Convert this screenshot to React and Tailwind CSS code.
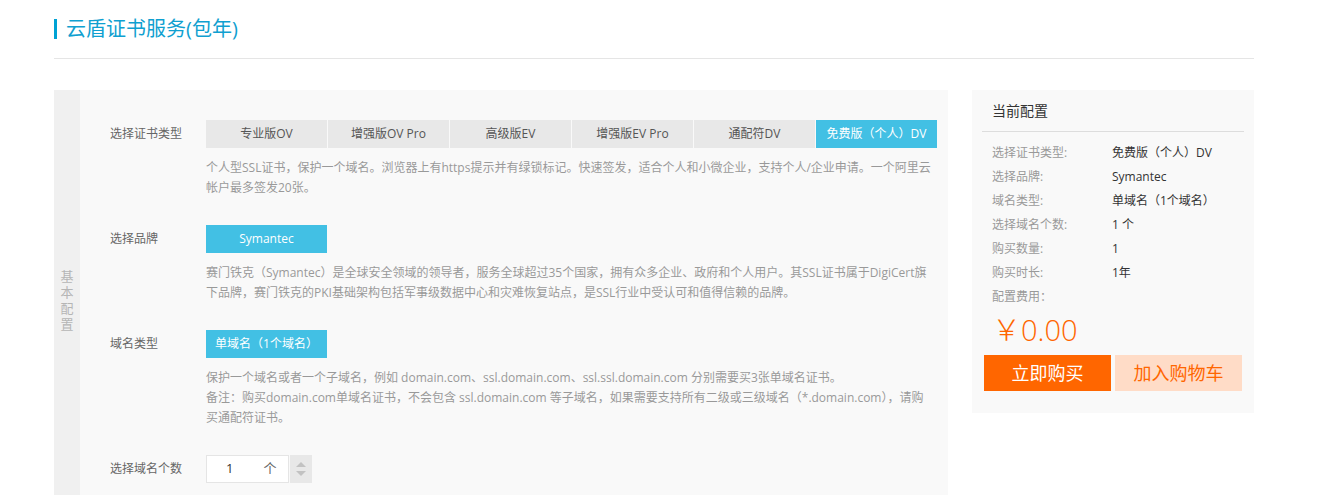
import React from "react";

const tabs = ["专业版OV", "增强版OV Pro", "高级版EV", "增强版EV Pro", "通配符DV", "免费版（个人）DV"];

function Desc({ lines }) {
  return (
    <div className="mt-[10px] text-[12px] leading-[20px] text-[#999]">
      {lines.map((l, i) => (
        <div key={i} className="whitespace-nowrap">{l}</div>
      ))}
    </div>
  );
}

function Row({ label, children, last }) {
  return (
    <div className={`flex ${last ? "" : "mb-[27px]"}`}>
      <div className="w-[96px] shrink-0 text-[12px] leading-[28px] text-[#666]">{label}</div>
      <div className="flex-1">{children}</div>
    </div>
  );
}

function Btn({ children }) {
  return (
    <div className="w-[121px] h-[28px] flex items-center justify-center bg-[#42c0e4] text-white text-[12px] whitespace-nowrap">
      {children}
    </div>
  );
}

const summary = [
  ["选择证书类型:", "免费版（个人）DV"],
  ["选择品牌:", "Symantec"],
  ["域名类型:", "单域名（1个域名）"],
  ["选择域名个数:", "1 个"],
  ["购买数量:", "1"],
  ["购买时长:", "1年"],
];

export default function App() {
  return (
    <div className="w-[1341px] min-h-[495px] bg-white font-['Open_Sans','Noto_Sans_CJK_SC',sans-serif]">
      <div className="ml-[54px] w-[1200px]">
        <div className="pt-[19px] pb-[19px] border-b border-[#e5e5e5]">
          <div className="flex items-center h-[20px]">
            <div className="w-[3px] h-[20px] bg-[#00a2d4]" />
            <div className="ml-[9px] text-[20px] leading-[20px] text-[#0fa0d0]">云盾证书服务(包年)</div>
          </div>
        </div>

        <div className="mt-[31px] flex items-start">
          {/* left panel */}
          <div className="w-[894px] flex bg-[#f9f9f9]">
            <div className="w-[26px] shrink-0 bg-[#f0f0f0] flex flex-col items-center justify-center text-[13px] leading-[16px] text-[#b5b5b5]">
              <span className="block h-[16px] leading-[16px]">基</span>
              <span className="block h-[16px] leading-[16px]">本</span>
              <span className="block h-[16px] leading-[16px]">配</span>
              <span className="block h-[16px] leading-[16px]">置</span>
            </div>
            <div className="flex-1 pl-[30px] pt-[30px] pb-[27px]">
              <Row label="选择证书类型">
                <div className="flex gap-[1px]">
                  {tabs.map((t, i) => (
                    <div
                      key={t}
                      className={`w-[121px] h-[28px] flex items-center justify-center text-[12px] whitespace-nowrap ${
                        i === 5 ? "bg-[#42c0e4] text-white" : "bg-[#e8e8e8] text-[#555]"
                      }`}
                    >
                      {t}
                    </div>
                  ))}
                </div>
                <Desc
                  lines={[
                    "个人型SSL证书，保护一个域名。浏览器上有https提示并有绿锁标记。快速签发，适合个人和小微企业，支持个人/企业申请。一个阿里云",
                    "帐户最多签发20张。",
                  ]}
                />
              </Row>
              <Row label="选择品牌">
                <Btn>Symantec</Btn>
                <Desc
                  lines={[
                    "赛门铁克（Symantec）是全球安全领域的领导者，服务全球超过35个国家，拥有众多企业、政府和个人用户。其SSL证书属于DigiCert旗",
                    "下品牌，赛门铁克的PKI基础架构包括军事级数据中心和灾难恢复站点，是SSL行业中受认可和值得信赖的品牌。",
                  ]}
                />
              </Row>
              <Row label="域名类型">
                <Btn>单域名（1个域名）</Btn>
                <Desc
                  lines={[
                    "保护一个域名或者一个子域名，例如 domain.com、ssl.domain.com、ssl.ssl.domain.com 分别需要买3张单域名证书。",
                    "备注：购买domain.com单域名证书，不会包含 ssl.domain.com 等子域名，如果需要支持所有二级或三级域名（*.domain.com），请购",
                    "买通配符证书。",
                  ]}
                />
              </Row>
              <Row label="选择域名个数" last>
                <div className="flex">
                  <div className="w-[83px] h-[28px] bg-white border border-[#e5e5e5] flex items-center text-[13px] text-[#333]">
                    <span className="ml-[19px]">1</span>
                    <span className="ml-[30px] text-[#666]">个</span>
                  </div>
                  <div className="ml-[1px] w-[22px] h-[28px] bg-[#e8e8e8] flex flex-col items-center justify-center gap-[4px]">
                    <svg width="10" height="5" viewBox="0 0 10 5"><path d="M0 5 L5 0 L10 5 Z" fill="#c2c2c2" /></svg>
                    <svg width="10" height="5" viewBox="0 0 10 5"><path d="M0 0 L10 0 L5 5 Z" fill="#c2c2c2" /></svg>
                  </div>
                </div>
              </Row>
            </div>
          </div>

          {/* right panel */}
          <div className="ml-[24px] w-[282px] bg-[#f9f9f9] pb-[22px]">
            <div className="mx-[10px] px-[10px] h-[42px] flex items-center border-b border-[#dddddd] text-[14px] text-[#333]">
              当前配置
            </div>
            <div className="pt-[9px] px-[20px]">
              {summary.map(([k, v]) => (
                <div key={k} className="flex h-[24px] items-center text-[12px]">
                  <div className="w-[120px] text-[#999]">{k}</div>
                  <div className="text-[#333]">{v}</div>
                </div>
              ))}
              <div className="h-[24px] flex items-center text-[12px] text-[#999]">配置费用：</div>
              <div className="h-[40px] flex items-center text-[29px] leading-none text-[#ff6600] font-light">
                ￥0.00
              </div>
            </div>
            <div className="mt-[6px] px-[12px] flex gap-[4px]">
              <div className="w-[127px] h-[36px] flex items-center justify-center bg-[#ff6600] text-white text-[18px]">
                立即购买
              </div>
              <div className="w-[127px] h-[36px] flex items-center justify-center bg-[#ffdcc7] text-[#ff6600] text-[18px]">
                加入购物车
              </div>
            </div>
          </div>
        </div>
      </div>
    </div>
  );
}
